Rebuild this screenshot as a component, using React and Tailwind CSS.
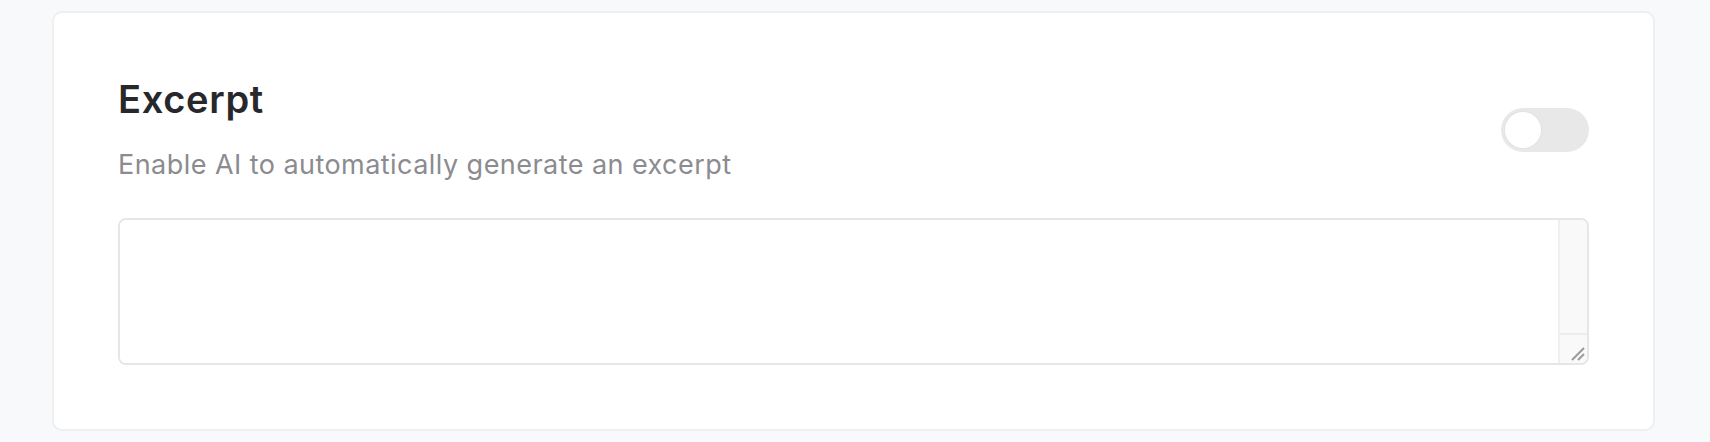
import React from "react";

export default function App() {
  return (
    <div
      className="min-h-[442px] w-full bg-[#f8f9fb] pl-[52px] pr-[55px] pt-[11px]"
      style={{ fontFamily: "Inter, 'Noto Sans', sans-serif" }}
    >
      <div className="rounded-[10px] border-2 border-[#eeeff1] bg-white px-[64px] pb-[64px] pt-[66px]">
        <div className="flex items-center justify-between">
          <div className="flex flex-col">
            <h2 className="text-[38px] font-semibold leading-[40px] tracking-[0.7px] text-[#27272c]">
              Excerpt
            </h2>
            <p className="mt-[30px] text-[27px] leading-[32px] tracking-[0.45px] text-[#8b8b90]">
              Enable AI to automatically generate an excerpt
            </p>
          </div>
          <button
            type="button"
            className="flex h-[44px] w-[88px] items-center rounded-full bg-[#e8e8e8] px-[4px]"
          >
            <span className="h-[36px] w-[36px] rounded-full bg-white shadow-[0_0_0_1px_#e2e2e2]" />
          </button>
        </div>
        <div className="mt-[37px] flex h-[147px] overflow-hidden rounded-[8px] border-2 border-[#e6e6e6] bg-white">
          <textarea className="block h-full flex-1 resize-none bg-white outline-none" />
          <div className="flex w-[29px] flex-col border-l-2 border-[#efefef] bg-[#f9f9f9]">
            <div className="flex-1" />
            <div className="flex h-[30px] items-end justify-end border-t-2 border-[#ececec] p-[2px]">
              <svg width="16" height="16" viewBox="0 0 16 16">
                <line x1="3" y1="15" x2="15" y2="3" stroke="#9a9a9a" strokeWidth="2" />
                <line x1="9" y1="15" x2="15" y2="9" stroke="#9a9a9a" strokeWidth="2" />
              </svg>
            </div>
          </div>
        </div>
      </div>
    </div>
  );
}
